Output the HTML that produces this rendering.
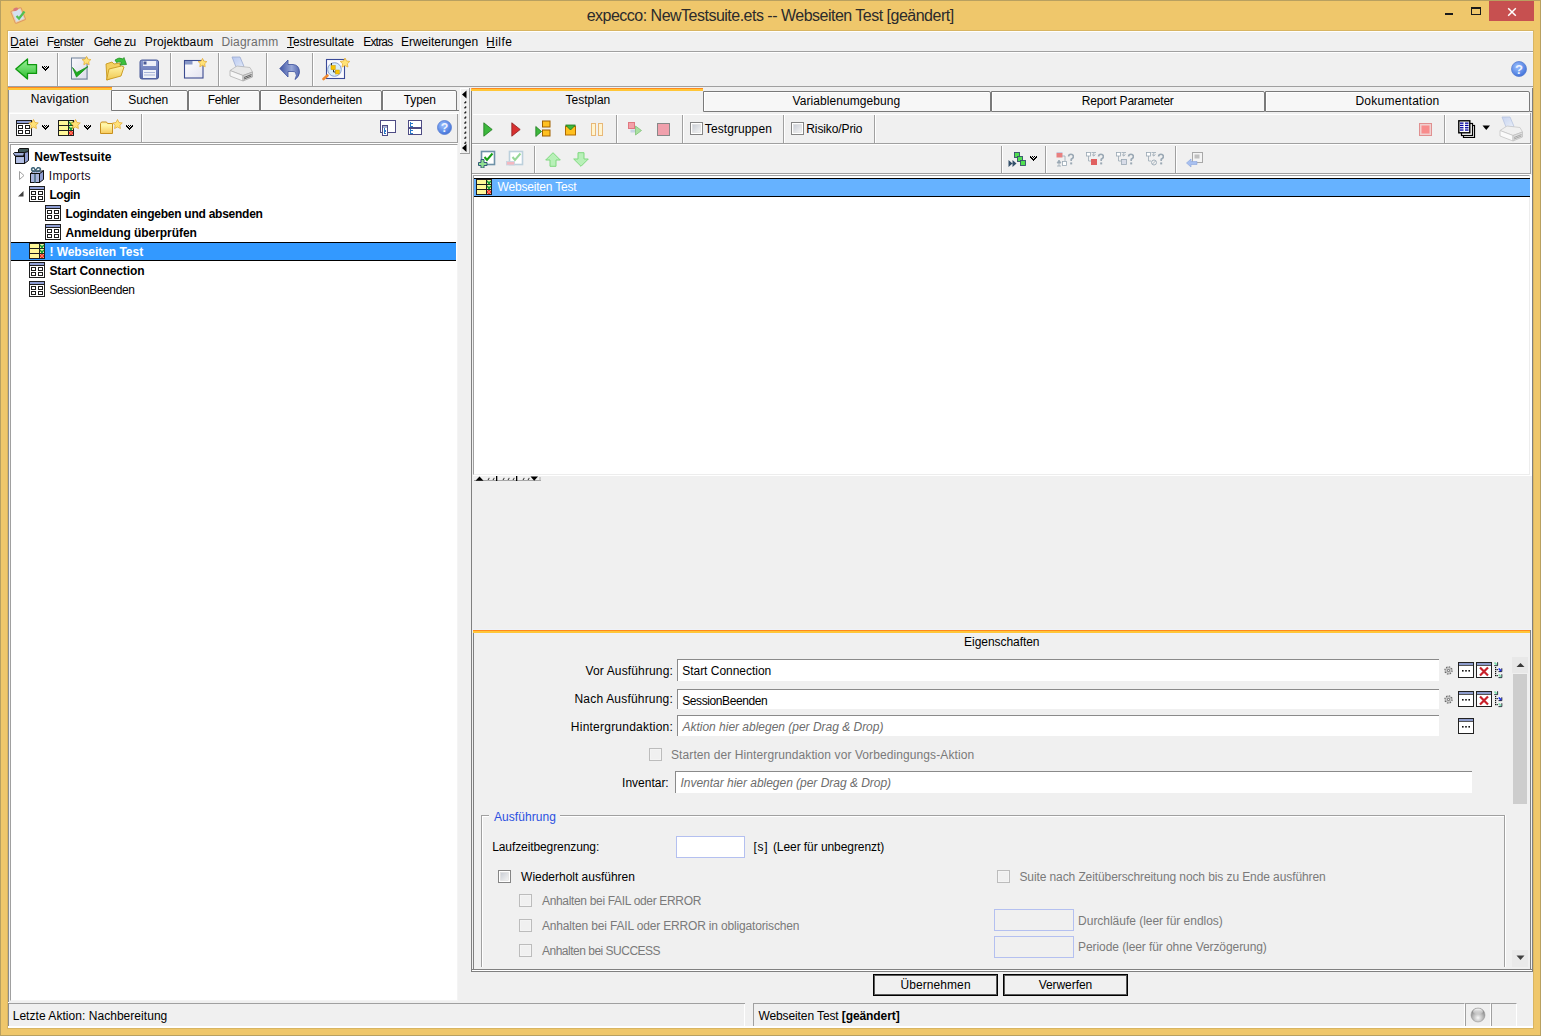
<!DOCTYPE html><html><head><meta charset="utf-8"><style>
*{box-sizing:border-box}
html,body{margin:0;padding:0}
body{width:1541px;height:1036px;overflow:hidden;position:relative;font-family:"Liberation Sans",sans-serif;font-size:12px;color:#000}
.a{position:absolute}
.t{position:absolute;white-space:pre;line-height:12px}
</style></head><body>
<div class="a" style="left:0px;top:0px;width:1541px;height:1036px;background:#EFC76B;border:1px solid #B8A060"></div>
<svg class="a" style="left:9px;top:6px" width="18" height="18" viewBox="0 0 18 18"><g transform="rotate(-22 9 9)"><rect x="3.5" y="3" width="11" height="13" rx="1" fill="#E8D0B0" stroke="#E09860" stroke-width="1"/><rect x="5" y="4.5" width="8" height="10" fill="#D4E0F0"/><ellipse cx="9" cy="2.8" rx="2.6" ry="1.5" fill="#D87878"/></g><path d="M7.5 10 L10 12.5 L15.5 5.5" stroke="#52C052" stroke-width="2.2" fill="none"/></svg>
<div class="t" id="kccd4b130" style="left:470.15px;width:600px;text-align:center;top:10px;font-size:16px;color:#2B2B2B;letter-spacing:-0.506px;">expecco: NewTestsuite.ets -- Webseiten Test [geändert]</div>
<div class="a" style="left:1445px;top:13px;width:8px;height:2px;background:#1A1A1A"></div>
<div class="a" style="left:1471px;top:7px;width:10px;height:8px;border:1px solid #1A1A1A;border-top-width:2px"></div>
<div class="a" style="left:1489px;top:1px;width:45px;height:20px;background:#C75050"></div>
<svg class="a" style="left:1507px;top:7px" width="10" height="10" viewBox="0 0 10 10"><path d="M1.2 1.2 L8.8 8.8 M8.8 1.2 L1.2 8.8" stroke="#fff" stroke-width="1.5"/></svg>
<div class="a" style="left:7px;top:30px;width:1527px;height:999px;background:#D8B562"></div>
<div class="a" style="left:8px;top:31px;width:1525px;height:997px;background:#F0F0F0;border-left:1px solid #fff;border-top:1px solid #fff"></div>
<div class="t" id="kaefbc809" style="left:10.00px;top:36px;letter-spacing:0.125px;">Datei</div>
<div class="t" id="k5df12504" style="left:46.70px;top:36px;letter-spacing:-0.516px;">Fenster</div>
<div class="t" id="k2c842ff4" style="left:93.80px;top:36px;letter-spacing:-0.484px;">Gehe zu</div>
<div class="t" id="k5e4ccc3b" style="left:144.80px;top:36px;letter-spacing:0.100px;">Projektbaum</div>
<div class="t" id="k87a4740a" style="left:221.40px;top:36px;color:#6D6D6D;letter-spacing:0.201px;">Diagramm</div>
<div class="t" id="k8d06de96" style="left:287.00px;top:36px;letter-spacing:-0.066px;">Testresultate</div>
<div class="t" id="k8dcd6ffd" style="left:363.20px;top:36px;letter-spacing:-0.800px;">Extras</div>
<div class="t" id="kdd1e9f0c" style="left:401.00px;top:36px;letter-spacing:-0.018px;">Erweiterungen</div>
<div class="t" id="k5d4437a9" style="left:486.00px;top:36px;letter-spacing:0.500px;">Hilfe</div>
<div class="a" style="left:11px;top:47px;width:8px;height:1px;background:#000"></div>
<div class="a" style="left:54px;top:47px;width:6px;height:1px;background:#000"></div>
<div class="a" style="left:287px;top:47px;width:7px;height:1px;background:#000"></div>
<div class="a" style="left:487px;top:47px;width:8px;height:1px;background:#000"></div>
<div class="a" style="left:8px;top:51px;width:1525px;height:1px;background:#A0A0A0"></div>
<div class="a" style="left:8px;top:52px;width:1525px;height:1px;background:#fff"></div>
<div class="a" style="left:57px;top:53px;width:1px;height:33px;background:#A0A0A0"></div>
<div class="a" style="left:58px;top:53px;width:1px;height:33px;background:#fff"></div>
<div class="a" style="left:170px;top:53px;width:1px;height:33px;background:#A0A0A0"></div>
<div class="a" style="left:171px;top:53px;width:1px;height:33px;background:#fff"></div>
<div class="a" style="left:218px;top:53px;width:1px;height:33px;background:#A0A0A0"></div>
<div class="a" style="left:219px;top:53px;width:1px;height:33px;background:#fff"></div>
<div class="a" style="left:266px;top:53px;width:1px;height:33px;background:#A0A0A0"></div>
<div class="a" style="left:267px;top:53px;width:1px;height:33px;background:#fff"></div>
<div class="a" style="left:312px;top:53px;width:1px;height:33px;background:#A0A0A0"></div>
<div class="a" style="left:313px;top:53px;width:1px;height:33px;background:#fff"></div>
<div class="a" style="left:8px;top:86px;width:1525px;height:1px;background:#A0A0A0"></div>
<svg class="a" style="left:15px;top:58px" width="23" height="23" viewBox="0 0 23 23"><defs><linearGradient id="ga" x1="0" y1="0" x2="0" y2="1"><stop offset="0" stop-color="#9CF29C"/><stop offset="1" stop-color="#2DBE2D"/></linearGradient></defs><path d="M0.8 11 L12.5 1 V6.6 H21.5 V15.4 H12.5 V21 Z" fill="url(#ga)" stroke="#0E980E" stroke-width="1.3" stroke-linejoin="round"/></svg>
<svg class="a" style="left:42px;top:66px" width="7" height="5" viewBox="0 0 7 5"><rect x="0" y="0" width="1" height="1" fill="#000"/><rect x="2" y="0" width="1" height="1" fill="#000"/><rect x="4" y="0" width="1" height="1" fill="#000"/><rect x="6" y="0" width="1" height="1" fill="#000"/><rect x="0" y="1" width="1" height="1" fill="#000"/><rect x="1" y="1" width="1" height="1" fill="#000"/><rect x="3" y="1" width="1" height="1" fill="#000"/><rect x="5" y="1" width="1" height="1" fill="#000"/><rect x="6" y="1" width="1" height="1" fill="#000"/><rect x="1" y="2" width="1" height="1" fill="#000"/><rect x="2" y="2" width="1" height="1" fill="#000"/><rect x="4" y="2" width="1" height="1" fill="#000"/><rect x="5" y="2" width="1" height="1" fill="#000"/><rect x="2" y="3" width="1" height="1" fill="#000"/><rect x="3" y="3" width="1" height="1" fill="#000"/><rect x="4" y="3" width="1" height="1" fill="#000"/><rect x="3" y="4" width="1" height="1" fill="#000"/></svg>
<svg class="a" style="left:70px;top:56px" width="24" height="25" viewBox="0 0 24 25"><defs><linearGradient id="gdoc" x1="0" y1="0" x2="1" y2="1"><stop offset="0" stop-color="#F8F8FC"/><stop offset="1" stop-color="#DCDCE8"/></linearGradient></defs><rect x="2" y="3" width="16" height="21" fill="#A8B0C0" opacity="0.5"/><rect x="1.5" y="2" width="15.5" height="21" fill="url(#gdoc)" stroke="#6E8098"/><path d="M2.5 11.5 L6.5 21 L18 10.5 L6.8 16.5 Z" fill="#1EAA1E" stroke="#14901A" stroke-width="0.8" stroke-linejoin="round"/><polygon points="16.50,0.40 17.85,3.14 20.87,3.58 18.69,5.71 19.20,8.72 16.50,7.30 13.80,8.72 14.31,5.71 12.13,3.58 15.15,3.14" fill="#FFE278" stroke="#E2A82A" stroke-width="0.7"/></svg>
<svg class="a" style="left:104px;top:56px" width="24" height="26" viewBox="0 0 24 26"><defs><linearGradient id="gfo" x1="0" y1="0" x2="0" y2="1"><stop offset="0" stop-color="#FFF4A8"/><stop offset="1" stop-color="#F0C850"/></linearGradient></defs><path d="M2 8 L8 6 L10 8 L16 7 L17 18 L3 24 Z" fill="#F4D060" stroke="#C8981E" stroke-width="0.9"/><path d="M2.5 24 L5 13 L17.5 10 L20 11 L17 20 Z" fill="url(#gfo)" stroke="#C8981E" stroke-width="0.9"/><path d="M11 4 Q15 0.5 19 3 L20 1.5 L22.5 8.5 L16 9 L17.5 6.5 Q15 5 12.5 6.5 Z" fill="#3CC03C" stroke="#1E8A1E" stroke-width="0.7"/></svg>
<svg class="a" style="left:139px;top:59px" width="21" height="21" viewBox="0 0 21 21"><defs><linearGradient id="gfl" x1="0" y1="0" x2="0" y2="1"><stop offset="0" stop-color="#8A9AD0"/><stop offset="1" stop-color="#5C6CAC"/></linearGradient></defs><rect x="1" y="1" width="18.5" height="19" rx="2" fill="url(#gfl)" stroke="#4A5A98" stroke-width="1"/><rect x="4" y="2" width="13" height="5" fill="#EEF0F8"/><rect x="4.5" y="2.5" width="3" height="3" fill="#4A5A98"/><rect x="4" y="11" width="13" height="8" fill="#F0F2F8"/><line x1="5" y1="13.5" x2="16" y2="13.5" stroke="#A8B4D8"/><line x1="5" y1="16" x2="16" y2="16" stroke="#A8B4D8"/></svg>
<svg class="a" style="left:183px;top:57px" width="26" height="23" viewBox="0 0 26 23"><defs><linearGradient id="gnw" x1="0" y1="0" x2="1" y2="1"><stop offset="0" stop-color="#FFFFFF"/><stop offset="1" stop-color="#E4E4F0"/></linearGradient></defs><rect x="1.5" y="3.5" width="18.5" height="17.5" fill="url(#gnw)" stroke="#3C4C90" stroke-width="1.1"/><rect x="2" y="4" width="7.5" height="3.5" fill="#8898C8"/><polygon points="19.50,1.40 20.85,4.14 23.87,4.58 21.69,6.71 22.20,9.72 19.50,8.30 16.80,9.72 17.31,6.71 15.13,4.58 18.15,4.14" fill="#FFE278" stroke="#E2A82A" stroke-width="0.7"/></svg>
<svg class="a" style="left:229px;top:56px" width="25" height="26" viewBox="0 0 25 26"><defs><linearGradient id="gpp" x1="0" y1="0" x2="1" y2="1"><stop offset="0" stop-color="#B8C8F0"/><stop offset="1" stop-color="#E0E8F8"/></linearGradient></defs><path d="M3 1 L11 1 L15 10.5 L7 11 Z" fill="url(#gpp)" stroke="#9AAAD0" stroke-width="0.8"/><path d="M1 14.5 L8 10 L21 11.5 L23.5 16 L14 19.5 Z" fill="#E8E8E8" stroke="#B8B8B8" stroke-width="0.8"/><path d="M1 14.5 L14 19.5 V25 L1 20 Z" fill="#F6F6F6" stroke="#B0B0B0" stroke-width="0.8"/><path d="M14 19.5 L23.5 16 V21 L14 25 Z" fill="#D4D4D4" stroke="#A8A8A8" stroke-width="0.8"/><path d="M15 21.5 L22.5 18.5 M15 23 L22.5 20" stroke="#606060" stroke-width="1"/></svg>
<svg class="a" style="left:279px;top:59px" width="22" height="21" viewBox="0 0 22 21"><defs><linearGradient id="gu" x1="0" y1="0" x2="1" y2="0"><stop offset="0" stop-color="#3E54A4"/><stop offset="0.6" stop-color="#98A8D8"/><stop offset="1" stop-color="#5468B0"/></linearGradient></defs><path d="M0.8 9.5 L9 1 V5.5 H14 Q20.5 6 20.5 13.5 Q20 18 16 20.5 Q18.5 16 16.5 13.5 Q15.5 12.5 14 12.5 H9 V18 Z" fill="url(#gu)" stroke="#3A4E9C" stroke-width="0.8" stroke-linejoin="round"/></svg>
<svg class="a" style="left:322px;top:57px" width="28" height="24" viewBox="0 0 28 24"><rect x="4.5" y="2.5" width="18" height="19" fill="#FAFAFF" stroke="#3A4A98" stroke-width="1.1"/><circle cx="12.5" cy="12.5" r="6.8" fill="#D8EEFA" stroke="#8AA0D0" stroke-width="1"/><path d="M9.5 6 V8.5 M11.5 12.5 V15 H14.5" stroke="#222" stroke-width="0.9" fill="none"/><rect x="9" y="8.5" width="4.2" height="4.2" fill="#F8C400" stroke="#C89000" stroke-width="0.5"/><rect x="13.5" y="13" width="3.8" height="4" fill="#F8C400" stroke="#C89000" stroke-width="0.5"/><path d="M1.5 22 L5.5 18.5" stroke="#F08A30" stroke-width="2.6" stroke-linecap="round"/><polygon points="23.00,1.00 24.47,3.98 27.76,4.45 25.38,6.77 25.94,10.05 23.00,8.50 20.06,10.05 20.62,6.77 18.24,4.45 21.53,3.98" fill="#FFE278" stroke="#E2A82A" stroke-width="0.7"/></svg>
<svg class="a" style="left:1511px;top:61px" width="16" height="16" viewBox="0 0 16 16"><defs><radialGradient id="hg1511" cx="40%" cy="35%" r="70%"><stop offset="0" stop-color="#9CC0FF"/><stop offset="1" stop-color="#3D6FD8"/></radialGradient></defs><circle cx="8.0" cy="8.0" r="7.5" fill="url(#hg1511)" stroke="#5A7FD0" stroke-width="0.8"/><text x="8.0" y="12.8" text-anchor="middle" font-family="Liberation Sans" font-weight="bold" font-size="13.12" fill="#EEF2FF">?</text></svg>
<div class="a" style="left:8px;top:87px;width:104px;height:26px;background:#F0F0F0"></div>
<div class="a" style="left:8px;top:87px;width:1px;height:915px;background:#8C8C8C"></div>
<div class="a" style="left:8px;top:87px;width:104px;height:1px;background:#FF8A1E"></div>
<div class="a" style="left:8px;top:88px;width:104px;height:2px;background:#FFC638"></div>
<div class="t" id="kcbd604a4" style="left:-240.07px;width:600px;text-align:center;top:93px;letter-spacing:0.166px;">Navigation</div>
<div class="a" style="left:111px;top:90px;width:77px;height:21px;background:#F7F7F7;border:1px solid #7A7A7A;border-top-right-radius:2px;box-shadow:inset 1px 1px #fff"></div>
<div class="t" id="ka7045a3e" style="left:-151.84px;width:600px;text-align:center;top:94px;letter-spacing:-0.180px;">Suchen</div>
<div class="a" style="left:188px;top:90px;width:72px;height:21px;background:#F7F7F7;border:1px solid #7A7A7A;border-top-right-radius:2px;box-shadow:inset 1px 1px #fff"></div>
<div class="t" id="k3cbd5feb" style="left:-76.46px;width:600px;text-align:center;top:94px;letter-spacing:-0.420px;">Fehler</div>
<div class="a" style="left:260px;top:90px;width:122px;height:21px;background:#F7F7F7;border:1px solid #7A7A7A;border-top-right-radius:2px;box-shadow:inset 1px 1px #fff"></div>
<div class="t" id="k46b76f99" style="left:20.60px;width:600px;text-align:center;top:94px;letter-spacing:-0.070px;">Besonderheiten</div>
<div class="a" style="left:382px;top:90px;width:75px;height:21px;background:#F7F7F7;border:1px solid #7A7A7A;border-top-right-radius:2px;box-shadow:inset 1px 1px #fff"></div>
<div class="t" id="kda2931dd" style="left:119.84px;width:600px;text-align:center;top:94px;letter-spacing:-0.150px;">Typen</div>
<div class="a" style="left:112px;top:110px;width:347px;height:1px;background:#7A7A7A"></div>
<div class="a" style="left:112px;top:111px;width:347px;height:1px;background:#F7F7F7"></div>
<div class="a" style="left:9px;top:112px;width:450px;height:1px;background:#F7F7F7"></div>
<div class="a" style="left:9px;top:113px;width:450px;height:1px;background:#fff"></div>
<div class="a" style="left:9px;top:114px;width:449px;height:28px;background:#F0F0F0;border-left:1px solid #fff;border-right:1px solid #A0A0A0"></div>
<div class="a" style="left:141px;top:114px;width:1px;height:28px;background:#A0A0A0"></div>
<div class="a" style="left:142px;top:114px;width:1px;height:28px;background:#fff"></div>
<div class="a" style="left:9px;top:142px;width:449px;height:1px;background:#A0A0A0"></div>
<div class="a" style="left:9px;top:143px;width:449px;height:1px;background:#fff"></div>
<svg class="a" style="left:16px;top:119px" width="24" height="18" viewBox="0 0 24 18"><g transform="translate(0,1)"><g shape-rendering="crispEdges"><rect x="0" y="0" width="16" height="16" fill="#1E1E1E"/><rect x="1" y="1" width="14" height="2" fill="#8E9ED4"/><rect x="1" y="4" width="14" height="11" fill="#fff"/><rect x="2" y="5" width="5" height="4" fill="#1E1E1E"/><rect x="3" y="6" width="3" height="2" fill="#fff"/><rect x="9" y="5" width="5" height="4" fill="#1E1E1E"/><rect x="10" y="6" width="3" height="2" fill="#fff"/><rect x="2" y="10" width="5" height="4" fill="#1E1E1E"/><rect x="3" y="11" width="3" height="2" fill="#fff"/><rect x="9" y="10" width="5" height="4" fill="#1E1E1E"/><rect x="10" y="11" width="3" height="2" fill="#fff"/></g></g><polygon points="17.50,0.50 18.97,3.48 22.26,3.95 19.88,6.27 20.44,9.55 17.50,8.00 14.56,9.55 15.12,6.27 12.74,3.95 16.03,3.48" fill="#FFE278" stroke="#E2A82A" stroke-width="0.7"/></svg>
<svg class="a" style="left:42px;top:125px" width="7" height="5" viewBox="0 0 7 5"><rect x="0" y="0" width="1" height="1" fill="#000"/><rect x="2" y="0" width="1" height="1" fill="#000"/><rect x="4" y="0" width="1" height="1" fill="#000"/><rect x="6" y="0" width="1" height="1" fill="#000"/><rect x="0" y="1" width="1" height="1" fill="#000"/><rect x="1" y="1" width="1" height="1" fill="#000"/><rect x="3" y="1" width="1" height="1" fill="#000"/><rect x="5" y="1" width="1" height="1" fill="#000"/><rect x="6" y="1" width="1" height="1" fill="#000"/><rect x="1" y="2" width="1" height="1" fill="#000"/><rect x="2" y="2" width="1" height="1" fill="#000"/><rect x="4" y="2" width="1" height="1" fill="#000"/><rect x="5" y="2" width="1" height="1" fill="#000"/><rect x="2" y="3" width="1" height="1" fill="#000"/><rect x="3" y="3" width="1" height="1" fill="#000"/><rect x="4" y="3" width="1" height="1" fill="#000"/><rect x="3" y="4" width="1" height="1" fill="#000"/></svg>
<svg class="a" style="left:58px;top:119px" width="24" height="18" viewBox="0 0 24 18"><g transform="translate(0,1)"><g shape-rendering="crispEdges"><rect x="0" y="0" width="16" height="16" fill="#1E1E1E"/><rect x="1" y="1" width="9" height="4" fill="#FFF898"/><rect x="1" y="6" width="9" height="4" fill="#FFF898"/><rect x="1" y="11" width="9" height="4" fill="#FFF898"/><rect x="11" y="1" width="4" height="4" fill="#F8F8A8"/><rect x="11" y="6" width="4" height="4" fill="#F8F8A8"/><rect x="11" y="11" width="4" height="4" fill="#FFF8C0"/></g><path d="M11.2 1.8 L13 4.6 L14.8 1.8" stroke="#109A30" stroke-width="1.5" fill="none"/><path d="M11.2 6.8 L13 9.6 L14.8 6.8" stroke="#109A30" stroke-width="1.5" fill="none"/><circle cx="13" cy="13" r="1.5" fill="none" stroke="#F01010" stroke-width="1.1"/><rect x="12.4" y="12.4" width="1.2" height="1.2" fill="#F01010"/></g><polygon points="17.50,0.50 18.97,3.48 22.26,3.95 19.88,6.27 20.44,9.55 17.50,8.00 14.56,9.55 15.12,6.27 12.74,3.95 16.03,3.48" fill="#FFE278" stroke="#E2A82A" stroke-width="0.7"/></svg>
<svg class="a" style="left:84px;top:125px" width="7" height="5" viewBox="0 0 7 5"><rect x="0" y="0" width="1" height="1" fill="#000"/><rect x="2" y="0" width="1" height="1" fill="#000"/><rect x="4" y="0" width="1" height="1" fill="#000"/><rect x="6" y="0" width="1" height="1" fill="#000"/><rect x="0" y="1" width="1" height="1" fill="#000"/><rect x="1" y="1" width="1" height="1" fill="#000"/><rect x="3" y="1" width="1" height="1" fill="#000"/><rect x="5" y="1" width="1" height="1" fill="#000"/><rect x="6" y="1" width="1" height="1" fill="#000"/><rect x="1" y="2" width="1" height="1" fill="#000"/><rect x="2" y="2" width="1" height="1" fill="#000"/><rect x="4" y="2" width="1" height="1" fill="#000"/><rect x="5" y="2" width="1" height="1" fill="#000"/><rect x="2" y="3" width="1" height="1" fill="#000"/><rect x="3" y="3" width="1" height="1" fill="#000"/><rect x="4" y="3" width="1" height="1" fill="#000"/><rect x="3" y="4" width="1" height="1" fill="#000"/></svg>
<svg class="a" style="left:99px;top:119px" width="24" height="18" viewBox="0 0 24 18"><defs><linearGradient id="gfd" x1="0" y1="0" x2="0" y2="1"><stop offset="0" stop-color="#FFFBB0"/><stop offset="1" stop-color="#F8CC60"/></linearGradient></defs><path d="M1.5 4.5 L2.5 3 H7.5 L8.5 4.5 H13.5 V14.5 H1.5 Z" fill="#FFF0A0" stroke="#C8901E" stroke-width="1"/><rect x="2" y="5.5" width="11" height="8.5" fill="url(#gfd)"/><polygon points="18.50,0.50 19.97,3.48 23.26,3.95 20.88,6.27 21.44,9.55 18.50,8.00 15.56,9.55 16.12,6.27 13.74,3.95 17.03,3.48" fill="#FFE278" stroke="#E2A82A" stroke-width="0.7"/></svg>
<svg class="a" style="left:126px;top:125px" width="7" height="5" viewBox="0 0 7 5"><rect x="0" y="0" width="1" height="1" fill="#000"/><rect x="2" y="0" width="1" height="1" fill="#000"/><rect x="4" y="0" width="1" height="1" fill="#000"/><rect x="6" y="0" width="1" height="1" fill="#000"/><rect x="0" y="1" width="1" height="1" fill="#000"/><rect x="1" y="1" width="1" height="1" fill="#000"/><rect x="3" y="1" width="1" height="1" fill="#000"/><rect x="5" y="1" width="1" height="1" fill="#000"/><rect x="6" y="1" width="1" height="1" fill="#000"/><rect x="1" y="2" width="1" height="1" fill="#000"/><rect x="2" y="2" width="1" height="1" fill="#000"/><rect x="4" y="2" width="1" height="1" fill="#000"/><rect x="5" y="2" width="1" height="1" fill="#000"/><rect x="2" y="3" width="1" height="1" fill="#000"/><rect x="3" y="3" width="1" height="1" fill="#000"/><rect x="4" y="3" width="1" height="1" fill="#000"/><rect x="3" y="4" width="1" height="1" fill="#000"/></svg>
<svg class="a" style="left:380px;top:120px" width="16" height="16" viewBox="0 0 16 16"><g shape-rendering="crispEdges"><rect x="0" y="0" width="16" height="13" fill="#4E4C84"/><rect x="1" y="1" width="14" height="11" fill="#fff"/><rect x="2" y="5" width="6" height="11" fill="#4E4C84"/><rect x="3" y="6" width="4" height="9" fill="#fff"/><rect x="3" y="6" width="4" height="2" fill="#A8B0D0"/><rect x="4" y="8" width="1" height="6" fill="#2A78C8"/><rect x="5" y="10" width="1" height="2" fill="#2A78C8"/><rect x="5" y="13" width="1" height="1" fill="#2A78C8"/></g></svg>
<svg class="a" style="left:408px;top:120px" width="14" height="15" viewBox="0 0 14 15"><g shape-rendering="crispEdges"><rect x="0" y="0" width="14" height="15" fill="#4E4C84"/><rect x="1" y="1" width="12" height="6" fill="#fff"/><rect x="1" y="9" width="12" height="5" fill="#fff"/><rect x="2" y="2" width="1" height="5" fill="#2A78C8"/><rect x="3" y="3" width="2" height="1" fill="#2A78C8"/><rect x="3" y="6" width="2" height="1" fill="#2A78C8"/><rect x="2" y="9" width="1" height="5" fill="#2A78C8"/><rect x="3" y="10" width="2" height="1" fill="#2A78C8"/><rect x="3" y="13" width="2" height="1" fill="#2A78C8"/></g></svg>
<svg class="a" style="left:437px;top:120px" width="15" height="15" viewBox="0 0 15 15"><defs><radialGradient id="hg437" cx="40%" cy="35%" r="70%"><stop offset="0" stop-color="#9CC0FF"/><stop offset="1" stop-color="#3D6FD8"/></radialGradient></defs><circle cx="7.5" cy="7.5" r="7.0" fill="url(#hg437)" stroke="#5A7FD0" stroke-width="0.8"/><text x="7.5" y="12.0" text-anchor="middle" font-family="Liberation Sans" font-weight="bold" font-size="12.299999999999999" fill="#EEF2FF">?</text></svg>
<div class="a" style="left:10px;top:144px;width:448px;height:857px;background:#fff;border-left:1px solid #A0A0A0;border-top:1px solid #A0A0A0;border-right:1px solid #F4F4F4;border-bottom:1px solid #F4F4F4"></div>
<svg class="a" style="left:13px;top:148px" width="16" height="16" viewBox="0 0 16 16"><path d="M5.5 1.5 L6.5 0.5 H15.5 V4.5 H5.5 Z" fill="#405858" stroke="#111" stroke-width="1"/><path d="M11.5 4.5 L15.5 3.5 V12.5 L11.5 15.5 Z" fill="#8E9CD0" stroke="#111" stroke-width="1"/><path d="M0.5 5.5 L1.5 4.5 H11.5 L10.5 8 H2 Z" fill="#9EACD8" stroke="#111" stroke-width="1" stroke-linejoin="round"/><rect x="2.5" y="8.5" width="9" height="7" fill="#A9B6DE" stroke="#111" stroke-width="1"/><rect x="3.5" y="9.5" width="7" height="5" fill="#B4C0E4"/></svg>
<div class="t" id="k19617d6a" style="left:34.20px;top:151px;font-weight:700;letter-spacing:0.070px;">NewTestsuite</div>
<svg class="a" style="left:19px;top:171px" width="6" height="9" viewBox="0 0 6 9"><path d="M0.5 0.5 L5 4.5 L0.5 8.5 Z" fill="#fff" stroke="#A0A0A0"/></svg>
<svg class="a" style="left:30px;top:167px" width="15" height="16" viewBox="0 0 15 16"><path d="M9.5 6.5 L13.5 3.5 V12.5 L9.5 15.5 Z" fill="#8E9CD0" stroke="#111" stroke-width="1"/><path d="M0.5 6.5 L3.5 4 H13.5 L9.5 6.5 Z" fill="#B4C0E4" stroke="#111" stroke-width="0.9"/><rect x="0.5" y="6.5" width="9" height="9" fill="#A9B6DE" stroke="#111" stroke-width="1"/><path d="M5 7 V16" stroke="#3E6478" stroke-width="1.4"/><path d="M5 4.5 Q1.5 4.5 1.5 2 Q2 0.3 4 0.8 L5.5 3.5 L7.5 0.8 Q10 0.3 10.5 2 Q10 4.5 6 4.5" fill="none" stroke="#3E6478" stroke-width="1.4"/></svg>
<div class="t" id="k9c1fbfce" style="left:48.80px;top:170px;color:#1A0A20;letter-spacing:0.284px;">Imports</div>
<svg class="a" style="left:18px;top:191px" width="6" height="6" viewBox="0 0 6 6"><path d="M5.5 0 V5.5 H0 Z" fill="#404040"/></svg>
<svg class="a" style="left:29px;top:186px" width="16" height="16" viewBox="0 0 16 16"><g shape-rendering="crispEdges"><rect x="0" y="0" width="16" height="16" fill="#1E1E1E"/><rect x="1" y="1" width="14" height="2" fill="#8E9ED4"/><rect x="1" y="4" width="14" height="11" fill="#fff"/><rect x="2" y="5" width="5" height="4" fill="#1E1E1E"/><rect x="3" y="6" width="3" height="2" fill="#fff"/><rect x="9" y="5" width="5" height="4" fill="#1E1E1E"/><rect x="10" y="6" width="3" height="2" fill="#fff"/><rect x="2" y="10" width="5" height="4" fill="#1E1E1E"/><rect x="3" y="11" width="3" height="2" fill="#fff"/><rect x="9" y="10" width="5" height="4" fill="#1E1E1E"/><rect x="10" y="11" width="3" height="2" fill="#fff"/></g></svg>
<div class="t" id="kc9bfd10b" style="left:49.40px;top:189px;font-weight:700;letter-spacing:-0.450px;">Login</div>
<svg class="a" style="left:45px;top:205px" width="16" height="16" viewBox="0 0 16 16"><g shape-rendering="crispEdges"><rect x="0" y="0" width="16" height="16" fill="#1E1E1E"/><rect x="1" y="1" width="14" height="2" fill="#8E9ED4"/><rect x="1" y="4" width="14" height="11" fill="#fff"/><rect x="2" y="5" width="5" height="4" fill="#1E1E1E"/><rect x="3" y="6" width="3" height="2" fill="#fff"/><rect x="9" y="5" width="5" height="4" fill="#1E1E1E"/><rect x="10" y="6" width="3" height="2" fill="#fff"/><rect x="2" y="10" width="5" height="4" fill="#1E1E1E"/><rect x="3" y="11" width="3" height="2" fill="#fff"/><rect x="9" y="10" width="5" height="4" fill="#1E1E1E"/><rect x="10" y="11" width="3" height="2" fill="#fff"/></g></svg>
<div class="t" id="k93933f5f" style="left:65.40px;top:208px;font-weight:700;letter-spacing:-0.253px;">Logindaten eingeben und absenden</div>
<svg class="a" style="left:45px;top:224px" width="16" height="16" viewBox="0 0 16 16"><g shape-rendering="crispEdges"><rect x="0" y="0" width="16" height="16" fill="#1E1E1E"/><rect x="1" y="1" width="14" height="2" fill="#8E9ED4"/><rect x="1" y="4" width="14" height="11" fill="#fff"/><rect x="2" y="5" width="5" height="4" fill="#1E1E1E"/><rect x="3" y="6" width="3" height="2" fill="#fff"/><rect x="9" y="5" width="5" height="4" fill="#1E1E1E"/><rect x="10" y="6" width="3" height="2" fill="#fff"/><rect x="2" y="10" width="5" height="4" fill="#1E1E1E"/><rect x="3" y="11" width="3" height="2" fill="#fff"/><rect x="9" y="10" width="5" height="4" fill="#1E1E1E"/><rect x="10" y="11" width="3" height="2" fill="#fff"/></g></svg>
<div class="t" id="kb56ca53d" style="left:65.40px;top:227px;font-weight:700;letter-spacing:-0.064px;">Anmeldung überprüfen</div>
<div class="a" style="left:11px;top:242px;width:445px;height:19px;background:#3399FF;border-top:1px solid #000;border-bottom:1px solid #000"></div>
<svg class="a" style="left:29px;top:243px" width="16" height="16" viewBox="0 0 16 16"><g shape-rendering="crispEdges"><rect x="0" y="0" width="16" height="16" fill="#1E1E1E"/><rect x="1" y="1" width="9" height="4" fill="#FFF898"/><rect x="1" y="6" width="9" height="4" fill="#FFF898"/><rect x="1" y="11" width="9" height="4" fill="#FFF898"/><rect x="11" y="1" width="4" height="4" fill="#F8F8A8"/><rect x="11" y="6" width="4" height="4" fill="#F8F8A8"/><rect x="11" y="11" width="4" height="4" fill="#FFF8C0"/></g><path d="M11.2 1.8 L13 4.6 L14.8 1.8" stroke="#109A30" stroke-width="1.5" fill="none"/><path d="M11.2 6.8 L13 9.6 L14.8 6.8" stroke="#109A30" stroke-width="1.5" fill="none"/><circle cx="13" cy="13" r="1.5" fill="none" stroke="#F01010" stroke-width="1.1"/><rect x="12.4" y="12.4" width="1.2" height="1.2" fill="#F01010"/></svg>
<div class="t" id="k8fea4947" style="left:49.40px;top:246px;font-weight:700;color:#fff;letter-spacing:-0.033px;">! Webseiten Test</div>
<svg class="a" style="left:29px;top:262px" width="16" height="16" viewBox="0 0 16 16"><g shape-rendering="crispEdges"><rect x="0" y="0" width="16" height="16" fill="#1E1E1E"/><rect x="1" y="1" width="14" height="2" fill="#8E9ED4"/><rect x="1" y="4" width="14" height="11" fill="#fff"/><rect x="2" y="5" width="5" height="4" fill="#1E1E1E"/><rect x="3" y="6" width="3" height="2" fill="#fff"/><rect x="9" y="5" width="5" height="4" fill="#1E1E1E"/><rect x="10" y="6" width="3" height="2" fill="#fff"/><rect x="2" y="10" width="5" height="4" fill="#1E1E1E"/><rect x="3" y="11" width="3" height="2" fill="#fff"/><rect x="9" y="10" width="5" height="4" fill="#1E1E1E"/><rect x="10" y="11" width="3" height="2" fill="#fff"/></g></svg>
<div class="t" id="k909906d1" style="left:49.40px;top:265px;font-weight:700;letter-spacing:-0.100px;">Start Connection</div>
<svg class="a" style="left:29px;top:281px" width="16" height="16" viewBox="0 0 16 16"><g shape-rendering="crispEdges"><rect x="0" y="0" width="16" height="16" fill="#1E1E1E"/><rect x="1" y="1" width="14" height="2" fill="#8E9ED4"/><rect x="1" y="4" width="14" height="11" fill="#fff"/><rect x="2" y="5" width="5" height="4" fill="#1E1E1E"/><rect x="3" y="6" width="3" height="2" fill="#fff"/><rect x="9" y="5" width="5" height="4" fill="#1E1E1E"/><rect x="10" y="6" width="3" height="2" fill="#fff"/><rect x="2" y="10" width="5" height="4" fill="#1E1E1E"/><rect x="3" y="11" width="3" height="2" fill="#fff"/><rect x="9" y="10" width="5" height="4" fill="#1E1E1E"/><rect x="10" y="11" width="3" height="2" fill="#fff"/></g></svg>
<div class="t" id="ked05b645" style="left:49.40px;top:284px;letter-spacing:-0.406px;">SessionBeenden</div>
<div class="a" style="left:460px;top:88px;width:10px;height:66px;background:#F0F0F0;border-right:1px solid #A0A0A0;border-bottom:1px solid #A0A0A0;box-shadow:inset 1px 1px #fff"></div>
<svg class="a" style="left:461px;top:89px" width="8" height="64" viewBox="0 0 8 64"><path d="M5.5 1.5 V9.5 L1 5.5 Z" fill="#000"/><path d="M3.2 14.0 L5 12.3 V14.0 Z" fill="#111" stroke="#222" stroke-width="0.6"/><path d="M3.2 19.05 L5 17.35 V19.05 Z" fill="#111" stroke="#222" stroke-width="0.6"/><path d="M3.2 24.1 L5 22.4 V24.1 Z" fill="#111" stroke="#222" stroke-width="0.6"/><path d="M3.2 29.15 L5 27.45 V29.15 Z" fill="#111" stroke="#222" stroke-width="0.6"/><path d="M3.2 34.2 L5 32.5 V34.2 Z" fill="#111" stroke="#222" stroke-width="0.6"/><path d="M3.2 39.25 L5 37.55 V39.25 Z" fill="#111" stroke="#222" stroke-width="0.6"/><path d="M3.2 44.3 L5 42.599999999999994 V44.3 Z" fill="#111" stroke="#222" stroke-width="0.6"/><path d="M3.2 49.35 L5 47.650000000000006 V49.35 Z" fill="#111" stroke="#222" stroke-width="0.6"/><path d="M3.2 54.4 L5 52.7 V54.4 Z" fill="#111" stroke="#222" stroke-width="0.6"/><path d="M5.5 55 V63 L1 59 Z" fill="#000"/></svg>
<div class="a" style="left:471px;top:90px;width:1px;height:882px;background:#808080"></div>
<div class="a" style="left:472px;top:88px;width:1061px;height:1px;background:transparent"></div>
<div class="a" style="left:472px;top:88px;width:231px;height:25px;background:#F0F0F0"></div>
<div class="a" style="left:471px;top:88px;width:232px;height:1px;background:#FF8A1E;border-top-left-radius:2px"></div>
<div class="a" style="left:471px;top:89px;width:232px;height:2px;background:#FFC638"></div>
<div class="t" id="k880fd6a6" style="left:287.90px;width:600px;text-align:center;top:94px;">Testplan</div>
<div class="a" style="left:703px;top:91px;width:288px;height:21px;background:#F7F7F7;border:1px solid #7A7A7A;border-top-right-radius:2px;box-shadow:inset 1px 1px #fff"></div>
<div class="t" id="keadb37ef" style="left:546.39px;width:600px;text-align:center;top:95px;letter-spacing:0.068px;">Variablenumgebung</div>
<div class="a" style="left:991px;top:91px;width:274px;height:21px;background:#F7F7F7;border:1px solid #7A7A7A;border-top-right-radius:2px;box-shadow:inset 1px 1px #fff"></div>
<div class="t" id="kacae7bff" style="left:827.73px;width:600px;text-align:center;top:95px;letter-spacing:-0.219px;">Report Parameter</div>
<div class="a" style="left:1265px;top:91px;width:265px;height:21px;background:#F7F7F7;border:1px solid #7A7A7A;border-top-right-radius:2px;box-shadow:inset 1px 1px #fff"></div>
<div class="t" id="k964f9c1a" style="left:1097.47px;width:600px;text-align:center;top:95px;letter-spacing:0.259px;">Dokumentation</div>
<div class="a" style="left:472px;top:113px;width:1059px;height:31px;background:#F0F0F0;border-right:1px solid #A0A0A0"></div>
<div class="a" style="left:473px;top:114px;width:1057px;height:1px;background:#fff"></div>
<div class="a" style="left:616px;top:115px;width:1px;height:28px;background:#A0A0A0"></div>
<div class="a" style="left:617px;top:115px;width:1px;height:28px;background:#fff"></div>
<div class="a" style="left:682px;top:115px;width:1px;height:28px;background:#A0A0A0"></div>
<div class="a" style="left:683px;top:115px;width:1px;height:28px;background:#fff"></div>
<div class="a" style="left:783px;top:115px;width:1px;height:28px;background:#A0A0A0"></div>
<div class="a" style="left:784px;top:115px;width:1px;height:28px;background:#fff"></div>
<div class="a" style="left:874px;top:115px;width:1px;height:28px;background:#A0A0A0"></div>
<div class="a" style="left:875px;top:115px;width:1px;height:28px;background:#fff"></div>
<div class="a" style="left:1444px;top:115px;width:1px;height:28px;background:#A0A0A0"></div>
<div class="a" style="left:1445px;top:115px;width:1px;height:28px;background:#fff"></div>
<div class="a" style="left:472px;top:143px;width:1059px;height:1px;background:#A0A0A0"></div>
<div class="a" style="left:472px;top:144px;width:1058px;height:1px;background:#fff"></div>
<div class="a" style="left:1530px;top:111px;width:3px;height:1px;background:#7A7A7A"></div>
<svg class="a" style="left:690px;top:122px" width="13" height="13" viewBox="0 0 13 13"><defs><linearGradient id="cbg" x1="0" y1="0" x2="1" y2="1"><stop offset="0" stop-color="#C8CCD4"/><stop offset="1" stop-color="#F4F4F4"/></linearGradient></defs><rect x="0.5" y="0.5" width="12" height="12" fill="#fff" stroke="#858585"/><rect x="2.5" y="2.5" width="8" height="8" fill="url(#cbg)" stroke="#D8D8D8" stroke-width="0.5"/></svg>
<div class="t" id="kb9e32e68" style="left:704.80px;top:123px;letter-spacing:0.100px;">Testgruppen</div>
<svg class="a" style="left:791px;top:122px" width="13" height="13" viewBox="0 0 13 13"><defs><linearGradient id="cbg" x1="0" y1="0" x2="1" y2="1"><stop offset="0" stop-color="#C8CCD4"/><stop offset="1" stop-color="#F4F4F4"/></linearGradient></defs><rect x="0.5" y="0.5" width="12" height="12" fill="#fff" stroke="#858585"/><rect x="2.5" y="2.5" width="8" height="8" fill="url(#cbg)" stroke="#D8D8D8" stroke-width="0.5"/></svg>
<div class="t" id="k7779a8a9" style="left:806.30px;top:123px;letter-spacing:-0.110px;">Risiko/Prio</div>
<div class="a" style="left:472px;top:145px;width:1059px;height:29px;background:#F0F0F0;border-right:1px solid #A0A0A0"></div>
<div class="a" style="left:534px;top:146px;width:1px;height:27px;background:#A0A0A0"></div>
<div class="a" style="left:535px;top:146px;width:1px;height:27px;background:#fff"></div>
<div class="a" style="left:1001px;top:146px;width:1px;height:27px;background:#A0A0A0"></div>
<div class="a" style="left:1002px;top:146px;width:1px;height:27px;background:#fff"></div>
<div class="a" style="left:1045px;top:146px;width:1px;height:27px;background:#A0A0A0"></div>
<div class="a" style="left:1046px;top:146px;width:1px;height:27px;background:#fff"></div>
<div class="a" style="left:1175px;top:146px;width:1px;height:27px;background:#A0A0A0"></div>
<div class="a" style="left:1176px;top:146px;width:1px;height:27px;background:#fff"></div>
<div class="a" style="left:472px;top:173px;width:1059px;height:1px;background:#A0A0A0"></div>
<div class="a" style="left:472px;top:174px;width:1059px;height:1px;background:#fff"></div>
<svg class="a" style="left:483px;top:122px" width="10" height="15" viewBox="0 0 10 15"><path d="M0.8 0.8 L9.2 7.5 L0.8 14.2 Z" fill="#3CB83C" stroke="#1E7A1E" stroke-width="0.8"/></svg>
<svg class="a" style="left:511px;top:122px" width="10" height="15" viewBox="0 0 10 15"><path d="M0.8 0.8 L9.2 7.5 L0.8 14.2 Z" fill="#D83030" stroke="#8A2020" stroke-width="0.8"/></svg>
<svg class="a" style="left:535px;top:120px" width="16" height="18" viewBox="0 0 16 18"><path d="M0.8 6.5 L6.5 11.5 L0.8 16.5 Z" fill="#3CB83C" stroke="#1E7A1E" stroke-width="0.8"/><rect x="7.5" y="1" width="7.5" height="6" fill="#FFC020" stroke="#A06000"/><rect x="7.5" y="10" width="7.5" height="6" fill="#FFC020" stroke="#A06000"/></svg>
<svg class="a" style="left:565px;top:123px" width="11" height="13" viewBox="0 0 11 13"><rect x="0.5" y="3.5" width="10" height="8.5" fill="#FFC020" stroke="#B06A00"/><path d="M0.5 2 H10.5 L5.5 7 Z" fill="#3CB83C" stroke="#1E7A1E" stroke-width="0.8"/></svg>
<svg class="a" style="left:591px;top:123px" width="13" height="13" viewBox="0 0 13 13"><rect x="0.5" y="0.5" width="4" height="12" fill="#FFF4D0" stroke="#E8B878"/><rect x="7.5" y="0.5" width="4" height="12" fill="#FFF4D0" stroke="#E8B878"/></svg>
<svg class="a" style="left:627px;top:121px" width="16" height="16" viewBox="0 0 16 16"><rect x="1.5" y="1.5" width="6" height="6" fill="#F4A0A8" stroke="#E07880"/><rect x="3.5" y="8.5" width="5" height="3" fill="#C8D4E4"/><path d="M8.5 5 L14.5 9.5 L8.5 14 Z" fill="#A8E0A0" stroke="#80C078" stroke-width="0.8"/></svg>
<svg class="a" style="left:657px;top:123px" width="13" height="13" viewBox="0 0 13 13"><rect x="0.5" y="0.5" width="12" height="12" fill="#F0A0AC" stroke="#888"/></svg>
<svg class="a" style="left:1419px;top:123px" width="13" height="13" viewBox="0 0 13 13"><rect x="0.5" y="0.5" width="12" height="12" fill="#F0D0D0" stroke="#E09090"/><rect x="2.5" y="2.5" width="8" height="8" fill="#F88C8C"/></svg>
<svg class="a" style="left:1458px;top:120px" width="18" height="18" viewBox="0 0 18 18"><rect x="5.5" y="5.5" width="11" height="12" fill="#fff" stroke="#000" stroke-width="1.2"/><rect x="3.5" y="3.5" width="11" height="12" fill="#fff" stroke="#000" stroke-width="1.2"/><rect x="0.8" y="0.8" width="11" height="12" fill="#fff" stroke="#000" stroke-width="1.4"/><rect x="2" y="2.5" width="3.5" height="1.3" fill="#0000A0"/><rect x="7" y="2.5" width="3.5" height="1.3" fill="#0000A0"/><rect x="2" y="4.8" width="3.5" height="1.3" fill="#0000A0"/><rect x="7" y="4.8" width="3.5" height="1.3" fill="#0000A0"/><rect x="2" y="7.1" width="3.5" height="1.3" fill="#0000A0"/><rect x="7" y="7.1" width="3.5" height="1.3" fill="#0000A0"/><rect x="2" y="9.399999999999999" width="3.5" height="1.3" fill="#0000A0"/><rect x="7" y="9.399999999999999" width="3.5" height="1.3" fill="#0000A0"/></svg>
<svg class="a" style="left:1482px;top:125px" width="9" height="6" viewBox="0 0 9 6"><path d="M0.5 0.5 H8 L4.25 5 Z" fill="#000"/></svg>
<svg class="a" style="left:1499px;top:116px" width="25" height="26" viewBox="0 0 25 26"><defs><linearGradient id="gpp2" x1="0" y1="0" x2="1" y2="1"><stop offset="0" stop-color="#C8D4F0"/><stop offset="1" stop-color="#E8EEF8"/></linearGradient></defs><path d="M3 1 L11 1 L15 10.5 L7 11 Z" fill="url(#gpp2)" stroke="#B8C4E0" stroke-width="0.8"/><path d="M1 14.5 L8 10 L21 11.5 L23.5 16 L14 19.5 Z" fill="#F0F0F0" stroke="#C8C8C8" stroke-width="0.8"/><path d="M1 14.5 L14 19.5 V25 L1 20 Z" fill="#FAFAFA" stroke="#C4C4C4" stroke-width="0.8"/><path d="M14 19.5 L23.5 16 V21 L14 25 Z" fill="#E0E0E0" stroke="#C0C0C0" stroke-width="0.8"/><path d="M15 21.5 L22.5 18.5 M15 23 L22.5 20" stroke="#A8A8A8" stroke-width="1"/></svg>
<svg class="a" style="left:478px;top:150px" width="18" height="18" viewBox="0 0 18 18"><rect x="3.5" y="1.5" width="13" height="13" fill="#fff" stroke="#6E92A8" stroke-width="1.6"/><path d="M6.5 7 L9 10 L14.5 3.5" stroke="#18A018" stroke-width="2" fill="none"/><path d="M3 9.5 H6 V12.5 H9 V15.5 H6 V18 H3 V15.5 H0.5 V12.5 H3 Z" fill="#90E090" stroke="#345A78" stroke-width="1"/></svg>
<svg class="a" style="left:506px;top:150px" width="18" height="18" viewBox="0 0 18 18"><rect x="3.5" y="1.5" width="13" height="13" fill="#fff" stroke="#BCD0DC" stroke-width="1.6"/><path d="M6.5 7 L9 10 L14.5 3.5" stroke="#98D898" stroke-width="2" fill="none"/><rect x="0.5" y="11.5" width="8" height="3.5" fill="#F4B8C0" stroke="#C8D4E0" stroke-width="0.8"/></svg>
<svg class="a" style="left:545px;top:152px" width="16" height="15" viewBox="0 0 16 15"><path d="M0.7 8 L8 0.7 L15.3 8 H11 V14.3 H5 V8 Z" fill="#B8F0B8" stroke="#7ED87E" stroke-width="1"/></svg>
<svg class="a" style="left:573px;top:152px" width="16" height="15" viewBox="0 0 16 15"><path d="M0.7 7 L8 14.3 L15.3 7 H11 V0.7 H5 V7 Z" fill="#B8F0B8" stroke="#7ED87E" stroke-width="1"/></svg>
<svg class="a" style="left:1008px;top:151px" width="19" height="17" viewBox="0 0 19 17"><rect x="6.5" y="1.5" width="5" height="5" fill="#50E050" stroke="#36506A" stroke-width="0.9"/><rect x="9.5" y="5.5" width="5" height="5" fill="#50E050" stroke="#36506A" stroke-width="0.9"/><rect x="12.5" y="9.5" width="5" height="5" fill="#50E050" stroke="#36506A" stroke-width="0.9"/><path d="M0.5 9 L4.5 12.5 L0.5 16 Z M4.5 9 L8.5 12.5 L4.5 16 Z" fill="#34506A"/></svg>
<svg class="a" style="left:1030px;top:156px" width="7" height="5" viewBox="0 0 7 5"><rect x="0" y="0" width="1" height="1" fill="#000"/><rect x="2" y="0" width="1" height="1" fill="#000"/><rect x="4" y="0" width="1" height="1" fill="#000"/><rect x="6" y="0" width="1" height="1" fill="#000"/><rect x="0" y="1" width="1" height="1" fill="#000"/><rect x="1" y="1" width="1" height="1" fill="#000"/><rect x="3" y="1" width="1" height="1" fill="#000"/><rect x="5" y="1" width="1" height="1" fill="#000"/><rect x="6" y="1" width="1" height="1" fill="#000"/><rect x="1" y="2" width="1" height="1" fill="#000"/><rect x="2" y="2" width="1" height="1" fill="#000"/><rect x="4" y="2" width="1" height="1" fill="#000"/><rect x="5" y="2" width="1" height="1" fill="#000"/><rect x="2" y="3" width="1" height="1" fill="#000"/><rect x="3" y="3" width="1" height="1" fill="#000"/><rect x="4" y="3" width="1" height="1" fill="#000"/><rect x="3" y="4" width="1" height="1" fill="#000"/></svg>
<svg class="a" style="left:1056px;top:152px" width="18" height="15" viewBox="0 0 18 15"><rect x="0.5" y="1" width="6" height="4.5" fill="#E88080"/><rect x="0.5" y="0" width="6" height="1" fill="#C8CCE0"/><path d="M3 8 L1 11 H5 Z M3 11 V14 M1 14 H5" stroke="#9AA8B4" fill="#9AA8B4" stroke-width="0.8"/><rect x="6.5" y="9.5" width="4" height="4" fill="#fff" stroke="#9AA8B4" stroke-width="0.8"/><path d="M6 4 H9 V9" stroke="#9AA8B4" fill="none" stroke-width="0.8"/><path d="M12.6 4.6 Q12.6 2.2 15 2.2 Q17.4 2.2 17.4 4.6 Q17.4 6.2 15.2 7.2 V9" stroke="#9AA8B4" stroke-width="1.6" fill="none"/><rect x="14.2" y="10.4" width="2" height="2" fill="#9AA8B4"/></svg>
<svg class="a" style="left:1086px;top:152px" width="18" height="15" viewBox="0 0 18 15"><rect x="0.5" y="0.5" width="4" height="3.5" fill="#fff" stroke="#9AA8B4" stroke-width="0.8"/><path d="M5.5 0.5 H10 M7.75 1 V4 L6 2.5 M7.75 4 L9.5 2.5 M2.5 4 V9 H5" stroke="#9AA8B4" fill="none" stroke-width="0.8"/><rect x="5" y="7" width="6" height="6" fill="#E06060"/><path d="M12.6 4.6 Q12.6 2.2 15 2.2 Q17.4 2.2 17.4 4.6 Q17.4 6.2 15.2 7.2 V9" stroke="#9AA8B4" stroke-width="1.6" fill="none"/><rect x="14.2" y="10.4" width="2" height="2" fill="#9AA8B4"/></svg>
<svg class="a" style="left:1116px;top:152px" width="18" height="15" viewBox="0 0 18 15"><rect x="0.5" y="0.5" width="4" height="3.5" fill="#fff" stroke="#9AA8B4" stroke-width="0.8"/><path d="M5.5 0.5 H10 M7.75 1 V4 L6 2.5 M7.75 4 L9.5 2.5 M2.5 4 V9 H5" stroke="#9AA8B4" fill="none" stroke-width="0.8"/><rect x="5.5" y="7.5" width="5" height="5" fill="#D8DCE8" stroke="#9AA8B4" stroke-width="0.8"/><path d="M12.6 4.6 Q12.6 2.2 15 2.2 Q17.4 2.2 17.4 4.6 Q17.4 6.2 15.2 7.2 V9" stroke="#9AA8B4" stroke-width="1.6" fill="none"/><rect x="14.2" y="10.4" width="2" height="2" fill="#9AA8B4"/></svg>
<svg class="a" style="left:1146px;top:152px" width="18" height="15" viewBox="0 0 18 15"><rect x="0.5" y="0.5" width="4" height="3.5" fill="#fff" stroke="#9AA8B4" stroke-width="0.8"/><path d="M5.5 0.5 H10 M7.75 1 V4 L6 2.5 M7.75 4 L9.5 2.5 M2.5 4 V9 H5" stroke="#9AA8B4" fill="none" stroke-width="0.8"/><circle cx="8" cy="10.5" r="2.5" fill="none" stroke="#9AA8B4" stroke-width="0.9"/><path d="M6.5 12 L9.5 9" stroke="#9AA8B4" stroke-width="0.8"/><path d="M12.6 4.6 Q12.6 2.2 15 2.2 Q17.4 2.2 17.4 4.6 Q17.4 6.2 15.2 7.2 V9" stroke="#9AA8B4" stroke-width="1.6" fill="none"/><rect x="14.2" y="10.4" width="2" height="2" fill="#9AA8B4"/></svg>
<svg class="a" style="left:1186px;top:151px" width="17" height="17" viewBox="0 0 17 17"><rect x="6.5" y="1.5" width="10" height="10" fill="#F4F4F4" stroke="#A8A8A8"/><rect x="8.5" y="3.5" width="5" height="4" fill="#C0C0C0"/><path d="M0.5 12 L5 8 V10.5 H11 V13.5 H5 V16 Z" fill="#A8C0F0" stroke="#8AA4DC" stroke-width="0.6"/></svg>
<div class="a" style="left:473px;top:175px;width:1059px;height:301px;background:#fff"></div>
<div class="a" style="left:473px;top:175px;width:1057px;height:300px;background:#fff;border-top:1px solid #A0A0A0;border-left:1px solid #A0A0A0;border-right:1px solid #EDEDED;border-bottom:1px solid #EDEDED"></div>
<div class="a" style="left:474px;top:178px;width:1056px;height:19px;background:#66B2FF;border-top:1px solid #000;border-bottom:1px solid #000"></div>
<svg class="a" style="left:476px;top:179px" width="16" height="16" viewBox="0 0 16 16"><g shape-rendering="crispEdges"><rect x="0" y="0" width="16" height="16" fill="#1E1E1E"/><rect x="1" y="1" width="9" height="4" fill="#FFF898"/><rect x="1" y="6" width="9" height="4" fill="#FFF898"/><rect x="1" y="11" width="9" height="4" fill="#FFF898"/><rect x="11" y="1" width="4" height="4" fill="#F8F8A8"/><rect x="11" y="6" width="4" height="4" fill="#F8F8A8"/><rect x="11" y="11" width="4" height="4" fill="#FFF8C0"/></g><path d="M11.2 1.8 L13 4.6 L14.8 1.8" stroke="#109A30" stroke-width="1.5" fill="none"/><path d="M11.2 6.8 L13 9.6 L14.8 6.8" stroke="#109A30" stroke-width="1.5" fill="none"/><circle cx="13" cy="13" r="1.5" fill="none" stroke="#F01010" stroke-width="1.1"/><rect x="12.4" y="12.4" width="1.2" height="1.2" fill="#F01010"/></svg>
<div class="t" id="k512bbb30" style="left:497.50px;top:181px;color:#fff;letter-spacing:-0.192px;">Webseiten Test</div>
<svg class="a" style="left:474px;top:475px" width="67" height="7" viewBox="0 0 67 7"><rect x="0" y="5" width="67" height="1" fill="#A8A8A8"/><path d="M1.5 5.8 L5.5 1.5 L9.5 5.8 Z" fill="#000"/><path d="M13.5 5 L15.1 2.6 L15.5 3.6 L14.5 5 Z" fill="#222"/><path d="M18.5 5 L20.1 2.6 L20.5 3.6 L19.5 5 Z" fill="#222"/><path d="M28.5 5 L30.1 2.6 L30.5 3.6 L29.5 5 Z" fill="#222"/><path d="M33.5 5 L35.1 2.6 L35.5 3.6 L34.5 5 Z" fill="#222"/><path d="M38.5 5 L40.1 2.6 L40.5 3.6 L39.5 5 Z" fill="#222"/><path d="M48.5 5 L50.1 2.6 L50.5 3.6 L49.5 5 Z" fill="#222"/><path d="M53.5 5 L55.1 2.6 L55.5 3.6 L54.5 5 Z" fill="#222"/><rect x="22" y="1" width="1.3" height="5" fill="#000"/><rect x="42" y="1" width="1.3" height="5" fill="#000"/><rect x="65.5" y="2" width="1" height="4" fill="#A8A8A8"/><path d="M56.5 1.5 L64 1.5 L60.2 5.8 Z" fill="#000"/></svg>
<div class="a" style="left:473px;top:631px;width:1px;height:339px;background:#808080"></div>
<div class="a" style="left:473px;top:629px;width:1058px;height:1px;background:#EEF2FA"></div>
<div class="a" style="left:473px;top:630px;width:1058px;height:1px;background:#FF8A1E"></div>
<div class="a" style="left:473px;top:631px;width:1058px;height:2px;background:#FFC638"></div>
<div class="a" style="left:474px;top:633px;width:1056px;height:1px;background:#EEF0F8"></div>
<div class="a" style="left:1530px;top:630px;width:1px;height:340px;background:#808080"></div>
<div class="a" style="left:471px;top:969px;width:1062px;height:1px;background:#808080"></div>
<div class="a" style="left:472px;top:970px;width:1060px;height:1px;background:#fff"></div>
<div class="a" style="left:471px;top:971px;width:1062px;height:1px;background:#808080"></div>
<div class="a" style="left:1532px;top:88px;width:1px;height:884px;background:#808080"></div>
<div class="t" id="ke9cae731" style="left:701.79px;width:600px;text-align:center;top:636px;letter-spacing:-0.050px;">Eigenschaften</div>
<div class="a" style="left:677px;top:659px;width:762px;height:22px;background:#fff;border-top:1px solid #8A8A8A;border-left:1px solid #8A8A8A"></div>
<div class="a" style="left:677px;top:689px;width:762px;height:20px;background:#fff;border-top:1px solid #8A8A8A;border-left:1px solid #8A8A8A"></div>
<div class="a" style="left:677px;top:715px;width:762px;height:21px;background:#fff;border-top:1px solid #8A8A8A;border-left:1px solid #8A8A8A"></div>
<div class="t" id="k11fa0b33" style="right:868.06px;top:665px;letter-spacing:0.143px;">Vor Ausführung:</div>
<div class="t" id="k9c805ab2" style="right:868.00px;top:693px;letter-spacing:0.194px;">Nach Ausführung:</div>
<div class="t" id="kf756e2a1" style="right:867.98px;top:721px;letter-spacing:0.229px;">Hintergrundaktion:</div>
<div class="t" id="k384d1d28" style="left:682.20px;top:665px;letter-spacing:-0.020px;">Start Connection</div>
<div class="t" id="k2ef971ad" style="left:682.20px;top:695px;letter-spacing:-0.406px;">SessionBeenden</div>
<div class="t" id="k2a38a835" style="left:682.50px;top:721px;color:#6D6D6D;font-style:italic;letter-spacing:-0.014px;">Aktion hier ablegen (per Drag &amp; Drop)</div>
<svg class="a" style="left:649px;top:748px" width="13" height="13" viewBox="0 0 13 13"><rect x="0.5" y="0.5" width="12" height="12" fill="#F4F4F4" stroke="#BCBCBC"/><rect x="2" y="2" width="9" height="9" fill="#F0F0F0"/></svg>
<div class="t" id="k18110b34" style="left:671.00px;top:749px;color:#7A7A7A;letter-spacing:0.093px;">Starten der Hintergrundaktion vor Vorbedingungs-Aktion</div>
<div class="a" style="left:675px;top:771px;width:797px;height:22px;background:#fff;border-top:1px solid #8A8A8A;border-left:1px solid #8A8A8A"></div>
<div class="t" id="k2477d741" style="right:872.31px;top:777px;letter-spacing:-0.009px;">Inventar:</div>
<div class="t" id="k50003d34" style="left:680.50px;top:777px;color:#6D6D6D;font-style:italic;letter-spacing:-0.022px;">Inventar hier ablegen (per Drag &amp; Drop)</div>
<svg class="a" style="left:1443px;top:665px" width="11" height="11" viewBox="0 0 11 11"><circle cx="5.5" cy="5.5" r="3.6" fill="none" stroke="#606060" stroke-width="1.1" stroke-dasharray="1.6 1.2"/><circle cx="5.5" cy="5.5" r="2.8" fill="none" stroke="#909090" stroke-width="0.8"/><circle cx="5.5" cy="5.5" r="1.2" fill="none" stroke="#505050" stroke-width="0.9"/></svg>
<svg class="a" style="left:1458px;top:662px" width="16" height="16" viewBox="0 0 16 16"><rect x="0.5" y="0.5" width="15" height="15" fill="#fff" stroke="#222"/><rect x="1" y="1" width="14" height="2" fill="#8C9BCB"/><line x1="1" y1="3.5" x2="15" y2="3.5" stroke="#555"/><rect x="4" y="8" width="1.6" height="1.6" fill="#111"/><rect x="7.2" y="8" width="1.6" height="1.6" fill="#111"/><rect x="10.4" y="8" width="1.6" height="1.6" fill="#111"/></svg>
<svg class="a" style="left:1476px;top:662px" width="16" height="16" viewBox="0 0 16 16"><rect x="0.5" y="0.5" width="15" height="15" fill="#fff" stroke="#222"/><rect x="1" y="1" width="14" height="2" fill="#8C9BCB"/><line x1="1" y1="3.5" x2="15" y2="3.5" stroke="#555"/><path d="M4 5.5 L12 13.5 M12 5.5 L4 13.5" stroke="#C8202A" stroke-width="2.2"/></svg>
<svg class="a" style="left:1494px;top:662px" width="9" height="17" viewBox="0 0 9 17"><path d="M0.5 0.5 L2.5 2.5" stroke="#80E0B0" stroke-width="1.6"/><path d="M3.6 0.3 V3.6 H0.3" stroke="#1A1A2A" stroke-width="1" fill="none"/><path d="M1 3.2 L3.2 3.2 L3.2 1 Z" fill="#80E0B0"/><rect x="1" y="5" width="1.2" height="1.2" fill="#111"/><rect x="1" y="7" width="1.2" height="1.2" fill="#111"/><rect x="1" y="9" width="1.2" height="1.2" fill="#111"/><rect x="1" y="11" width="1.2" height="1.2" fill="#111"/><rect x="1" y="13" width="1.2" height="1.2" fill="#111"/><rect x="2.6" y="7" width="1.2" height="1.2" fill="#111"/><rect x="2.6" y="13" width="1.2" height="1.2" fill="#111"/><path d="M4.7 6.5 L6.7 8.5" stroke="#1830F0" stroke-width="1.6"/><path d="M7.800000000000001 6.3 V9.6 H4.5" stroke="#1A1A2A" stroke-width="1" fill="none"/><path d="M5.2 9.2 L7.4 9.2 L7.4 7 Z" fill="#1830F0"/><path d="M4.7 12.5 L6.7 14.5" stroke="#80E0B0" stroke-width="1.6"/><path d="M7.800000000000001 12.3 V15.6 H4.5" stroke="#1A1A2A" stroke-width="1" fill="none"/><path d="M5.2 15.2 L7.4 15.2 L7.4 13 Z" fill="#80E0B0"/></svg>
<svg class="a" style="left:1443px;top:694px" width="11" height="11" viewBox="0 0 11 11"><circle cx="5.5" cy="5.5" r="3.6" fill="none" stroke="#606060" stroke-width="1.1" stroke-dasharray="1.6 1.2"/><circle cx="5.5" cy="5.5" r="2.8" fill="none" stroke="#909090" stroke-width="0.8"/><circle cx="5.5" cy="5.5" r="1.2" fill="none" stroke="#505050" stroke-width="0.9"/></svg>
<svg class="a" style="left:1458px;top:691px" width="16" height="16" viewBox="0 0 16 16"><rect x="0.5" y="0.5" width="15" height="15" fill="#fff" stroke="#222"/><rect x="1" y="1" width="14" height="2" fill="#8C9BCB"/><line x1="1" y1="3.5" x2="15" y2="3.5" stroke="#555"/><rect x="4" y="8" width="1.6" height="1.6" fill="#111"/><rect x="7.2" y="8" width="1.6" height="1.6" fill="#111"/><rect x="10.4" y="8" width="1.6" height="1.6" fill="#111"/></svg>
<svg class="a" style="left:1476px;top:691px" width="16" height="16" viewBox="0 0 16 16"><rect x="0.5" y="0.5" width="15" height="15" fill="#fff" stroke="#222"/><rect x="1" y="1" width="14" height="2" fill="#8C9BCB"/><line x1="1" y1="3.5" x2="15" y2="3.5" stroke="#555"/><path d="M4 5.5 L12 13.5 M12 5.5 L4 13.5" stroke="#C8202A" stroke-width="2.2"/></svg>
<svg class="a" style="left:1494px;top:691px" width="9" height="17" viewBox="0 0 9 17"><path d="M0.5 0.5 L2.5 2.5" stroke="#80E0B0" stroke-width="1.6"/><path d="M3.6 0.3 V3.6 H0.3" stroke="#1A1A2A" stroke-width="1" fill="none"/><path d="M1 3.2 L3.2 3.2 L3.2 1 Z" fill="#80E0B0"/><rect x="1" y="5" width="1.2" height="1.2" fill="#111"/><rect x="1" y="7" width="1.2" height="1.2" fill="#111"/><rect x="1" y="9" width="1.2" height="1.2" fill="#111"/><rect x="1" y="11" width="1.2" height="1.2" fill="#111"/><rect x="1" y="13" width="1.2" height="1.2" fill="#111"/><rect x="2.6" y="7" width="1.2" height="1.2" fill="#111"/><rect x="2.6" y="13" width="1.2" height="1.2" fill="#111"/><path d="M4.7 6.5 L6.7 8.5" stroke="#1830F0" stroke-width="1.6"/><path d="M7.800000000000001 6.3 V9.6 H4.5" stroke="#1A1A2A" stroke-width="1" fill="none"/><path d="M5.2 9.2 L7.4 9.2 L7.4 7 Z" fill="#1830F0"/><path d="M4.7 12.5 L6.7 14.5" stroke="#80E0B0" stroke-width="1.6"/><path d="M7.800000000000001 12.3 V15.6 H4.5" stroke="#1A1A2A" stroke-width="1" fill="none"/><path d="M5.2 15.2 L7.4 15.2 L7.4 13 Z" fill="#80E0B0"/></svg>
<svg class="a" style="left:1458px;top:718px" width="16" height="16" viewBox="0 0 16 16"><rect x="0.5" y="0.5" width="15" height="15" fill="#fff" stroke="#222"/><rect x="1" y="1" width="14" height="2" fill="#8C9BCB"/><line x1="1" y1="3.5" x2="15" y2="3.5" stroke="#555"/><rect x="4" y="8" width="1.6" height="1.6" fill="#111"/><rect x="7.2" y="8" width="1.6" height="1.6" fill="#111"/><rect x="10.4" y="8" width="1.6" height="1.6" fill="#111"/></svg>
<div class="a" style="left:1512px;top:657px;width:16px;height:16px;background:#E8E8E8"></div>
<svg class="a" style="left:1516px;top:662px" width="9" height="6" viewBox="0 0 9 6"><path d="M0.5 5 L4.5 1 L8.5 5 Z" fill="#3A3A3A"/></svg>
<div class="a" style="left:1513px;top:674px;width:14px;height:130px;background:#CDCDCD"></div>
<div class="a" style="left:1512px;top:950px;width:16px;height:17px;background:#EAEAEA"></div>
<svg class="a" style="left:1516px;top:955px" width="9" height="6" viewBox="0 0 9 6"><path d="M0.5 0.5 H8.5 L4.5 5 Z" fill="#404040"/></svg>
<div class="a" style="left:481px;top:815px;width:8px;height:1px;background:#A0A0A0"></div>
<div class="a" style="left:482px;top:816px;width:7px;height:1px;background:#fff"></div>
<div class="a" style="left:560px;top:815px;width:945px;height:1px;background:#A0A0A0"></div>
<div class="a" style="left:560px;top:816px;width:944px;height:1px;background:#fff"></div>
<div class="a" style="left:481px;top:815px;width:1px;height:152px;background:#A0A0A0"></div>
<div class="a" style="left:482px;top:816px;width:1px;height:151px;background:#fff"></div>
<div class="a" style="left:1504px;top:815px;width:1px;height:152px;background:#A0A0A0"></div>
<div class="a" style="left:1505px;top:815px;width:1px;height:152px;background:#fff"></div>
<div class="t" id="k80afa52f" style="left:493.90px;top:811px;color:#2B4FE0;letter-spacing:0.068px;">Ausführung</div>
<div class="t" id="k738bf0a3" style="left:492.20px;top:841px;letter-spacing:-0.095px;">Laufzeitbegrenzung:</div>
<div class="a" style="left:676px;top:836px;width:69px;height:22px;background:#fff;border:1px solid #B4C0F0"></div>
<div class="t" id="k82e67a10" style="left:753.40px;top:841px;letter-spacing:0.750px;">[s]</div>
<div class="t" id="kcc8c4738" style="left:772.90px;top:841px;letter-spacing:-0.070px;">(Leer für unbegrenzt)</div>
<svg class="a" style="left:498px;top:870px" width="13" height="13" viewBox="0 0 13 13"><defs><linearGradient id="cbg" x1="0" y1="0" x2="1" y2="1"><stop offset="0" stop-color="#C8CCD4"/><stop offset="1" stop-color="#F4F4F4"/></linearGradient></defs><rect x="0.5" y="0.5" width="12" height="12" fill="#fff" stroke="#858585"/><rect x="2.5" y="2.5" width="8" height="8" fill="url(#cbg)" stroke="#D8D8D8" stroke-width="0.5"/></svg>
<div class="t" id="k9c175f05" style="left:521.10px;top:871px;letter-spacing:-0.016px;">Wiederholt ausführen</div>
<svg class="a" style="left:997px;top:870px" width="13" height="13" viewBox="0 0 13 13"><rect x="0.5" y="0.5" width="12" height="12" fill="#F4F4F4" stroke="#BCBCBC"/><rect x="2" y="2" width="9" height="9" fill="#F0F0F0"/></svg>
<div class="t" id="k1e06b008" style="left:1019.40px;top:871px;color:#7A7A7A;letter-spacing:-0.095px;">Suite nach Zeitüberschreitung noch bis zu Ende ausführen</div>
<svg class="a" style="left:519px;top:894px" width="13" height="13" viewBox="0 0 13 13"><rect x="0.5" y="0.5" width="12" height="12" fill="#F4F4F4" stroke="#BCBCBC"/><rect x="2" y="2" width="9" height="9" fill="#F0F0F0"/></svg>
<div class="t" id="k0221f0e5" style="left:542.00px;top:895px;color:#7A7A7A;letter-spacing:-0.333px;">Anhalten bei FAIL oder ERROR</div>
<svg class="a" style="left:519px;top:919px" width="13" height="13" viewBox="0 0 13 13"><rect x="0.5" y="0.5" width="12" height="12" fill="#F4F4F4" stroke="#BCBCBC"/><rect x="2" y="2" width="9" height="9" fill="#F0F0F0"/></svg>
<div class="t" id="kdccca10c" style="left:542.00px;top:920px;color:#7A7A7A;letter-spacing:-0.165px;">Anhalten bei FAIL oder ERROR in obligatorischen</div>
<svg class="a" style="left:519px;top:944px" width="13" height="13" viewBox="0 0 13 13"><rect x="0.5" y="0.5" width="12" height="12" fill="#F4F4F4" stroke="#BCBCBC"/><rect x="2" y="2" width="9" height="9" fill="#F0F0F0"/></svg>
<div class="t" id="k2e3f422f" style="left:542.00px;top:945px;color:#7A7A7A;letter-spacing:-0.500px;">Anhalten bei SUCCESS</div>
<div class="a" style="left:994px;top:909px;width:80px;height:22px;background:#F0F0F0;border:1px solid #B4C0F0"></div>
<div class="t" id="kda27b86b" style="left:1078.10px;top:915px;color:#7A7A7A;letter-spacing:-0.025px;">Durchläufe (leer für endlos)</div>
<div class="a" style="left:994px;top:936px;width:80px;height:22px;background:#F0F0F0;border:1px solid #B4C0F0"></div>
<div class="t" id="k13fa2de1" style="left:1078.10px;top:941px;color:#7A7A7A;letter-spacing:-0.080px;">Periode (leer für ohne Verzögerung)</div>
<div class="a" style="left:873px;top:974px;width:125px;height:22px;background:#F0F0F0;border:1px solid #000;box-shadow:inset 0 0 0 1px #5A5A5A"></div>
<div class="t" id="k944079d2" style="left:635.54px;width:600px;text-align:center;top:979px;letter-spacing:0.086px;">Übernehmen</div>
<div class="a" style="left:1003px;top:974px;width:125px;height:22px;background:#F0F0F0;border:1px solid #000;box-shadow:inset 0 0 0 1px #5A5A5A"></div>
<div class="t" id="k8db57ab3" style="left:765.42px;width:600px;text-align:center;top:979px;letter-spacing:-0.060px;">Verwerfen</div>
<div class="a" style="left:8px;top:1003px;width:737px;height:1px;background:#A0A0A0"></div>
<div class="a" style="left:8px;top:1003px;width:1px;height:23px;background:#8C8C8C"></div>
<div class="a" style="left:744px;top:1004px;width:1px;height:22px;background:#fff"></div>
<div class="a" style="left:753px;top:1003px;width:712px;height:24px;border-top:1px solid #A0A0A0;border-left:1px solid #A0A0A0;border-right:1px solid #fff"></div>
<div class="a" style="left:1465px;top:1003px;width:26px;height:24px;border-top:1px solid #A0A0A0;border-left:1px solid #A0A0A0;border-right:1px solid #fff"></div>
<div class="a" style="left:1491px;top:1003px;width:26px;height:24px;border-top:1px solid #A0A0A0;border-left:1px solid #A0A0A0;border-right:1px solid #fff"></div>
<div class="a" style="left:8px;top:1026px;width:1525px;height:1px;background:#fff"></div>
<div class="a" style="left:8px;top:1027px;width:1525px;height:1px;background:#fff"></div>
<div class="t" id="kc3faafab" style="left:12.70px;top:1010px;letter-spacing:0.043px;">Letzte Aktion: Nachbereitung</div>
<div class="t" id="k9a0cdf6c" style="left:758.40px;top:1010px;letter-spacing:-0.099px;">Webseiten Test <b>[geändert]</b></div>
<svg class="a" style="left:1470px;top:1007px" width="16" height="16" viewBox="0 0 16 16"><defs><radialGradient id="gl" cx="50%" cy="70%" r="60%"><stop offset="0" stop-color="#F8F8F8"/><stop offset="0.6" stop-color="#B8B8B8"/><stop offset="1" stop-color="#888"/></radialGradient><linearGradient id="gl2" x1="0" y1="0" x2="0" y2="1"><stop offset="0" stop-color="#fff"/><stop offset="1" stop-color="#fff" stop-opacity="0"/></linearGradient></defs><circle cx="8" cy="8" r="7" fill="url(#gl)" stroke="#9A9A9A" stroke-width="0.6"/><ellipse cx="8" cy="4.5" rx="5" ry="3" fill="url(#gl2)"/></svg>
</body></html>
